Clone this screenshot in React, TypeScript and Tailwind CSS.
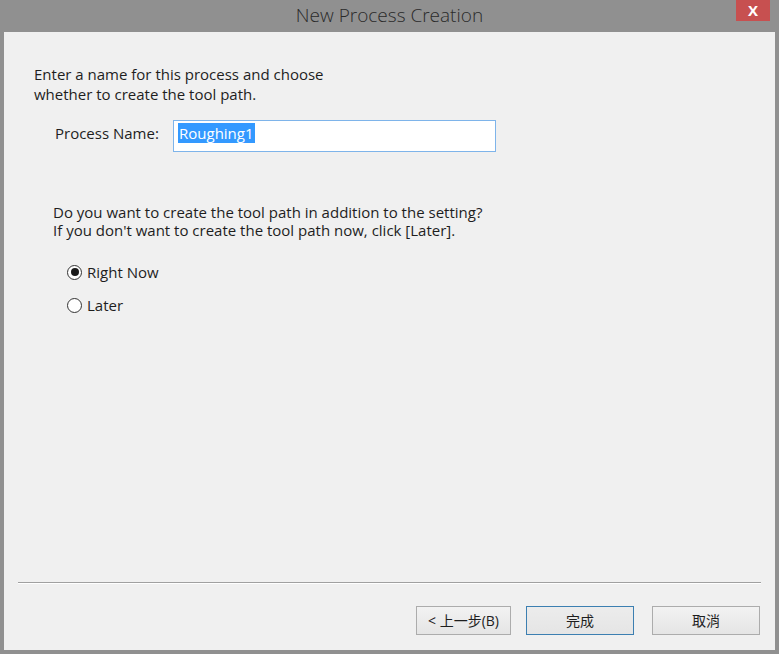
import React from "react";

const font = { fontFamily: '"Open Sans", "Noto Sans CJK TC", sans-serif' };

function Radio({ checked, label }: { checked: boolean; label: string }) {
  return (
    <label className="flex items-center gap-[5px] h-[20px]">
      <span className="w-[15px] h-[15px] rounded-full border border-[#333] bg-white flex items-center justify-center">
        {checked && <span className="w-[8px] h-[8px] rounded-full bg-[#1a1a1a]" />}
      </span>
      <span className="text-[15px] text-[#1e1e1e]">{label}</span>
    </label>
  );
}

function Btn({ children, active }: { children: React.ReactNode; active?: boolean }) {
  return (
    <button
      className={`w-full h-[29px] flex items-center justify-center text-[14px] text-[#1e1e1e] border bg-gradient-to-b ${
        active ? "border-[#3c7fb1] from-[#ececec] to-[#e5e5e5]" : "border-[#acacac] from-[#f2f2f2] to-[#e5e5e5]"
      }`}
    >
      {children}
    </button>
  );
}

export default function App() {
  return (
    <div className="w-[779px] h-[654px] bg-[#909090] flex flex-col" style={font}>
      <div className="h-[32px] flex items-start relative">
        <div className="flex-1 text-center text-[19px] font-light text-[#2a2a2a] leading-[30px]">
          New Process Creation
        </div>
        <div className="absolute right-[9px] top-0 w-[34px] h-[21px] bg-[#c75050] flex items-center justify-center text-white text-[15px] font-bold">
          X
        </div>
      </div>
      <div className="flex-1 mx-[4px] mb-[4px] bg-[#f0f0f0] flex flex-col">
        <div className="flex-1 pl-[30px] pt-[32px] text-[15px] text-[#1e1e1e]">
          <p className="leading-[20px]">
            Enter a name for this process and choose
            <br />
            whether to create the tool path.
          </p>
          <div className="flex items-start mt-[16px] pl-[21px]">
            <span className="w-[118px] leading-[20px] mt-[3px]">Process Name:</span>
            <div className="w-[323px] h-[32px] bg-white border border-[#7eb4ea] flex items-start pt-[2px] px-[4px]">
              <span className="bg-[#3399ff] text-white leading-[20px] px-[1px]">Roughing1</span>
            </div>
          </div>
          <p className="leading-[18px] mt-[51px] pl-[19px]">
            Do you want to create the tool path in addition to the setting?
            <br />
            If you don't want to create the tool path now, click [Later].
          </p>
          <div className="flex flex-col gap-[13px] mt-[23px] pl-[33px]">
            <Radio checked label="Right Now" />
            <Radio checked={false} label="Later" />
          </div>
        </div>
        <div className="mx-[14px] h-[2px] border-t border-[#a0a0a0] border-b border-b-white" />
        <div className="h-[66px] flex items-start justify-end pt-[22px] pr-[15px]">
          <div className="w-[95px]">
            <Btn>&lt; 上一步(B)</Btn>
          </div>
          <div className="w-[108px] ml-[15px]">
            <Btn active>完成</Btn>
          </div>
          <div className="w-[108px] ml-[18px]">
            <Btn>取消</Btn>
          </div>
        </div>
      </div>
    </div>
  );
}
